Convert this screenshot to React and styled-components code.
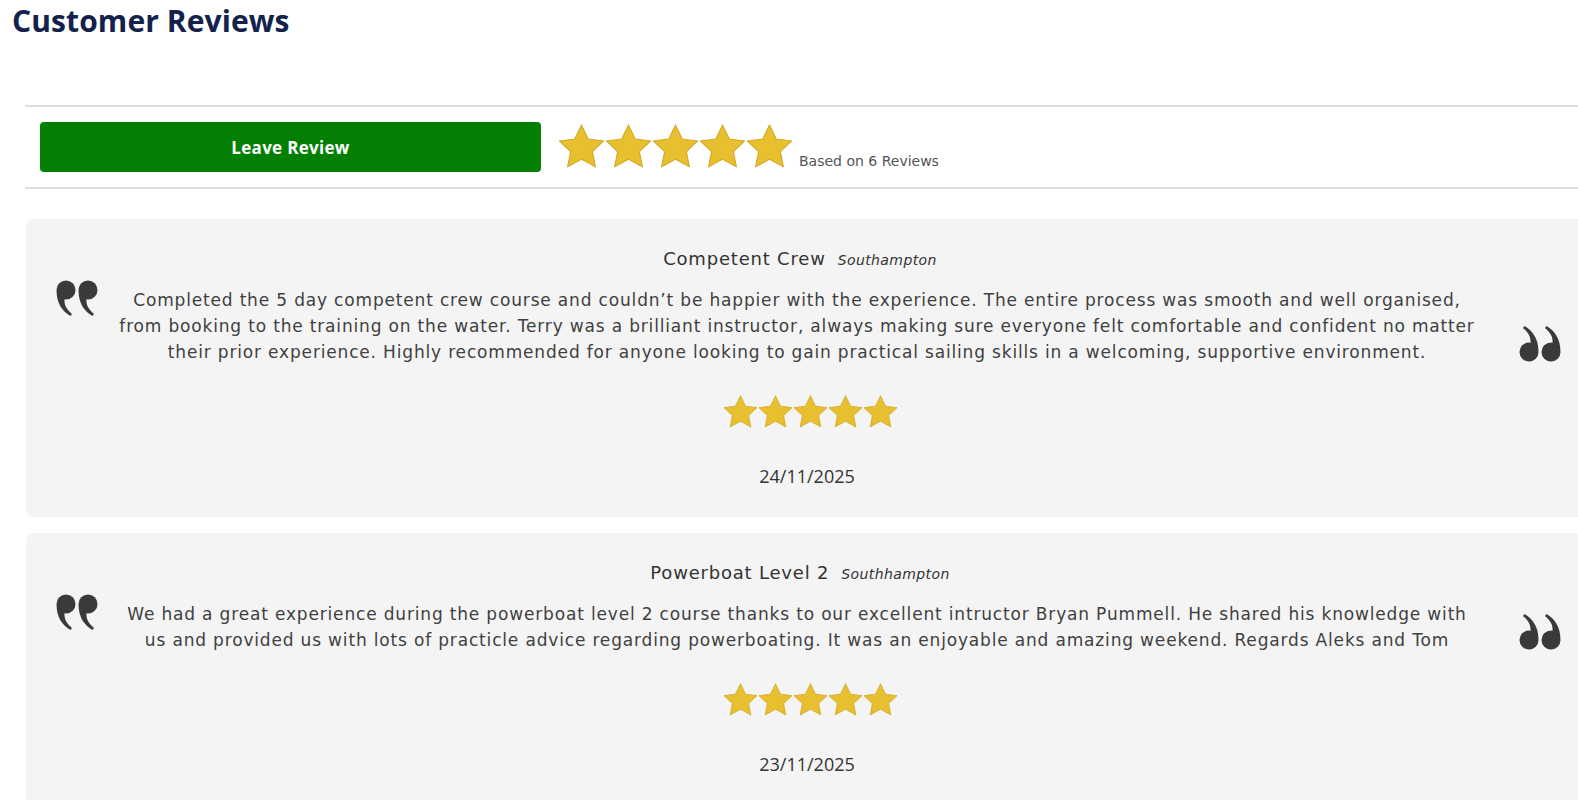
import React from "react";
import styled, { createGlobalStyle } from "styled-components";

const GlobalStyle = createGlobalStyle`
  html, body {
    margin: 0;
    padding: 0;
    background: #ffffff;
    overflow-x: hidden;
  }
  body {
    font-family: "DejaVu Sans", "Open Sans", sans-serif;
  }
`;

const Page = styled.main`
  width: 1578px;
  padding-top: 3px;
`;

const Heading = styled.h1`
  margin: 0 0 0 12px;
  font-family: "Open Sans", sans-serif;
  font-size: 30px;
  line-height: 36px;
  font-weight: 700;
  color: #13224d;
  letter-spacing: 0.1px;
`;

const Reviews = styled.section`
  margin: 66px 0 0 25px;
`;

const Summary = styled.div`
  display: flex;
  align-items: center;
  padding: 15px 15px;
  border-top: 2px solid #dedede;
  border-bottom: 2px solid #dedede;
`;

const LeaveButton = styled.button`
  width: 501px;
  height: 50px;
  border: 0;
  border-radius: 4px;
  background: #038003;
  color: #ffffff;
  font-family: "Open Sans", sans-serif;
  font-size: 17px;
  font-weight: 700;
  letter-spacing: 0.3px;
  cursor: pointer;
`;

const Stars = styled.div`
  display: flex;
  align-items: center;
`;

const StarIcon = styled.svg`
  width: ${(p) => p.size}px;
  height: ${(p) => p.size}px;
  display: block;
`;

const BigStars = styled.div`
  display: flex;
  align-items: flex-end;
  margin-left: 17px;
`;

const BasedOn = styled.span`
  margin: 0 0 1px 6px;
  font-size: 14px;
  line-height: 18px;
  color: #555555;
`;

const CardList = styled.div`
  display: flex;
  flex-direction: column;
  gap: 16px;
  margin: 30px 0 0 1px;
`;

const Card = styled.article`
  width: 1558px;
  box-sizing: border-box;
  background: #f4f4f4;
  border-radius: 8px;
  padding: 28px 20px 29px 20px;
  display: flex;
  flex-direction: column;
  align-items: center;
`;

const CardTitle = styled.div`
  font-size: 18px;
  line-height: 24px;
  letter-spacing: 0.8px;
  color: #333333;
  margin-right: 10px;
`;

const Place = styled.span`
  font-size: 14px;
  font-style: italic;
  letter-spacing: 0.4px;
  margin-left: 12px;
  color: #333333;
`;

const Body = styled.div`
  align-self: stretch;
  display: grid;
  grid-template-columns: 62px 1360px 85px;
  margin: 15px -9px 0 9px;
`;

const QuoteMark = styled.svg`
  width: 43px;
  height: 36px;
  align-self: ${(p) => p.align};
  justify-self: ${(p) => p.justify};
  margin: ${(p) => p.m};
`;

const Text = styled.p`
  margin: 0;
  font-size: 17px;
  line-height: 26px;
  text-align: center;
  color: #404040;
  letter-spacing: 0.83px;
`;

const SmallStars = styled.div`
  margin: 30px 0 0 10px;
`;

const DateText = styled.div`
  margin: 34px 0 0 4px;
  font-family: "Open Sans", sans-serif;
  font-size: 18px;
  line-height: 24px;
  color: #333333;
`;

const Star = ({ size }) => (
  <StarIcon size={size} viewBox="1.2 1.2 21.6 21.6">
    <path
      d="M12 1.6l3.1 6.5 7.1.9-5.2 4.9 1.4 7-6.4-3.5-6.4 3.5 1.4-7L1.8 9l7.1-.9z"
      fill="#e8bf2e"
      stroke="#d2a928"
      strokeWidth="0.5"
      strokeLinejoin="round"
    />
  </StarIcon>
);

const FiveStars = ({ size }) => (
  <Stars>
    {[0, 1, 2, 3, 4].map((i) => (
      <Star key={i} size={size} />
    ))}
  </Stars>
);

const Mark = ({ x }) => (
  <g transform={`translate(${x} 0)`}>
    <circle cx="11" cy="10" r="9.5" />
    <path d="M1.6 11 C1.6 23 7 31 15.5 36 L17 34 C11.5 29.5 9 25 9.5 19 Z" />
  </g>
);

const LeftQuote = () => (
  <QuoteMark viewBox="0 0 43 36" align="start" justify="start" m="-7px 0 0 0">
    <g fill="#3a3a3a">
      <Mark x={0} />
      <Mark x={22} />
    </g>
  </QuoteMark>
);

const RightQuote = () => (
  <QuoteMark viewBox="0 0 43 36" align="end" justify="end" m="0 0 3px 0">
    <g fill="#3a3a3a" transform="rotate(180 21.5 18)">
      <Mark x={0} />
      <Mark x={22} />
    </g>
  </QuoteMark>
);

const reviews = [
  {
    course: "Competent Crew",
    place: "Southampton",
    text: "Completed the 5 day competent crew course and couldn’t be happier with the experience. The entire process was smooth and well organised, from booking to the training on the water. Terry was a brilliant instructor, always making sure everyone felt comfortable and confident no matter their prior experience. Highly recommended for anyone looking to gain practical sailing skills in a welcoming, supportive environment.",
    date: "24/11/2025",
  },
  {
    course: "Powerboat Level 2",
    place: "Southhampton",
    text: "We had a great experience during the powerboat level 2 course thanks to our excellent intructor Bryan Pummell. He shared his knowledge with us and provided us with lots of practicle advice regarding powerboating. It was an enjoyable and amazing weekend. Regards Aleks and Tom",
    date: "23/11/2025",
  },
];

const ReviewCard = ({ review }) => (
  <Card>
    <CardTitle>
      {review.course}
      <Place>{review.place}</Place>
    </CardTitle>
    <Body>
      <LeftQuote />
      <Text>{review.text}</Text>
      <RightQuote />
    </Body>
    <SmallStars>
      <FiveStars size={35} />
    </SmallStars>
    <DateText>{review.date}</DateText>
  </Card>
);

export default function App() {
  return (
    <Page>
      <GlobalStyle />
      <Heading>Customer Reviews</Heading>
      <Reviews>
        <Summary>
          <LeaveButton>Leave Review</LeaveButton>
          <BigStars>
            <FiveStars size={47} />
            <BasedOn>Based on 6 Reviews</BasedOn>
          </BigStars>
        </Summary>
        <CardList>
          {reviews.map((r) => (
            <ReviewCard key={r.date} review={r} />
          ))}
        </CardList>
      </Reviews>
    </Page>
  );
}
